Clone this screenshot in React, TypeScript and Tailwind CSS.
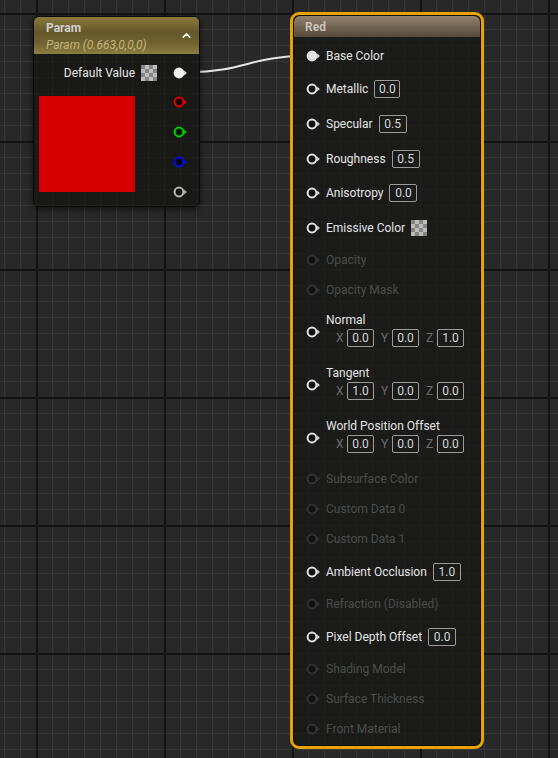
import * as React from "react";
import {ChevronUp} from "lucide-react";

const font = {fontFamily: "Roboto, 'Noto Sans', sans-serif"};

function Pin({color = "#e2e2e2", fill = "#111", solid = false}) {
  return (
    <svg width="14" height="12" viewBox="0 0 14 12" className="shrink-0">
      <circle
        cx="6"
        cy="6"
        r="4.4"
        fill={solid ? color : fill}
        stroke={color}
        strokeWidth="2"
      />
      <polygon points="11.2,3.6 13.8,6 11.2,8.4" fill={color} />
    </svg>
  );
}

function Checker() {
  return (
    <div className="w-4 h-4 shrink-0 bg-[conic-gradient(#bcbcbc_25%,#858585_0_50%,#bcbcbc_0_75%,#858585_0)] bg-[size:8px_8px]" />
  );
}

function ValueBox({value, w = "w-[28px]"}) {
  return (
    <div
      className={`${w} h-[18px] shrink-0 flex items-center justify-center border border-[#9a9a9a] rounded-[2px] text-[12px] text-[#d6d6d6] leading-none`}>
      {value}
    </div>
  );
}

function Row({label, h, disabled = false, solid = false, extra = null}) {
  return (
    <div className={`${h} shrink-0`}>
      <div className="h-5 flex items-center pl-3 gap-[6px]">
        {disabled ? (
          <Pin color="#333532" fill="#121311" />
        ) : (
          <Pin solid={solid} />
        )}
        <span
          className={`text-[12px] leading-none whitespace-nowrap ${
            disabled ? "text-[#4a4b49]" : "text-[#e4e4e4]"
          }`}>
          {label}
        </span>
        {extra}
      </div>
    </div>
  );
}

function VectorRow({label, h, values}) {
  return (
    <div className={`${h} shrink-0`}>
      <div className="h-9 flex items-center pl-3 gap-[6px]">
        <div className="mt-[6px]">
          <Pin />
        </div>
        <div className="flex flex-col">
          <div className="h-[18px] flex items-center text-[12px] text-[#e4e4e4] leading-none">
            {label}
          </div>
          <div className="h-[18px] flex items-center pl-[10px] gap-[7px]">
            {["X", "Y", "Z"].map((axis, i) => (
              <div key={axis} className="flex items-center gap-[4px]">
                <span className="w-[7px] text-[12px] text-[#6c6c6c] leading-none">
                  {axis}
                </span>
                <ValueBox value={values[i]} w="w-[27px]" />
              </div>
            ))}
          </div>
        </div>
      </div>
    </div>
  );
}

// faint canvas grid that shows through the node bodies
const bodyGrid =
  "bg-fixed bg-[linear-gradient(90deg,#1f201e_1px,transparent_1px),linear-gradient(#1f201e_1px,transparent_1px)] bg-[size:16px_16px,16px_16px] bg-[position:36px_13px,36px_13px]";

function ParamNode() {
  return (
    <div className="absolute left-[33px] top-[16px] w-[167px] h-[191px] rounded-[6px] border border-[#0b0b0b] overflow-hidden shadow-[0_2px_6px_rgba(0,0,0,0.6)] flex flex-col">
      <div className="h-[37px] shrink-0 relative bg-[linear-gradient(180deg,#8a7a3b_0%,#64572a_40%,#6f6230_70%,#8c7d42_100%)] pl-[12px] pt-[3px]">
        <div className="text-[12px] font-bold text-[#d0d0d0] leading-[17px]">
          Param
        </div>
        <div className="text-[12px] italic text-[#c2b47c] leading-[16px]">
          Param (0.663,0,0,0)
        </div>
        <ChevronUp
          size={13}
          strokeWidth={3}
          color="#f2f2f2"
          className="absolute right-[6px] top-[12px]"
        />
      </div>
      <div className={`flex-1 bg-[#181917] pt-[9px] ${bodyGrid}`}>
        <div className="h-5 flex items-center justify-end pr-[12px]">
          <span className="text-[12px] text-[#e6e6e6] leading-none">
            Default Value
          </span>
          <div className="ml-[6px]">
            <Checker />
          </div>
          <div className="ml-[16px]">
            <Pin color="#f2f2f2" solid />
          </div>
        </div>
        <div className="flex items-start justify-between mt-[9px] pl-[5px] pr-[12px]">
          <div className="mt-[4px] w-[96px] h-[96px] bg-[#d60000]" />
          <div className="flex flex-col gap-[10px]">
            <div className="h-5 flex items-center">
              <Pin color="#e00000" fill="#1a0000" />
            </div>
            <div className="h-5 flex items-center">
              <Pin color="#00d400" fill="#001a00" />
            </div>
            <div className="h-5 flex items-center">
              <Pin color="#0010e0" fill="#00001a" />
            </div>
            <div className="h-5 flex items-center">
              <Pin color="#b8b8b8" />
            </div>
          </div>
        </div>
      </div>
    </div>
  );
}

function RedNode() {
  return (
    <div className="absolute left-[290px] top-[12px] w-[194px] h-[737px] rounded-[9px] border-[3px] border-[#e9a300] bg-[#0e0e0d] p-px">
      <div className="w-full h-full rounded-[6px] overflow-hidden flex flex-col bg-[#1a1b19]">
        <div className="h-[21px] shrink-0 bg-[linear-gradient(180deg,#93836f_0%,#6f6150_55%,#574b3e_100%)] pl-[11px] flex items-center">
          <span className="text-[12px] font-bold text-[#c9c3ba] leading-none">
            Red
          </span>
        </div>
        <div className={`flex-1 flex flex-col pt-[9px] bg-[#1a1b19] ${bodyGrid}`}>
          <Row label="Base Color" h="h-[33px]" solid />
          <Row
            label="Metallic"
            h="h-[35px]"
            extra={<ValueBox value="0.0" w="w-[26px]" />}
          />
          <Row label="Specular" h="h-[35px]" extra={<ValueBox value="0.5" />} />
          <Row label="Roughness" h="h-[34px]" extra={<ValueBox value="0.5" />} />
          <Row label="Anisotropy" h="h-[35px]" extra={<ValueBox value="0.0" />} />
          <Row
            label="Emissive Color"
            h="h-[32px]"
            extra={<Checker />}
          />
          <Row label="Opacity" h="h-[30px]" disabled />
          <Row label="Opacity Mask" h="h-[31px]" disabled />
          <VectorRow label="Normal" h="h-[53px]" values={["0.0", "0.0", "1.0"]} />
          <VectorRow label="Tangent" h="h-[53px]" values={["1.0", "0.0", "0.0"]} />
          <VectorRow
            label="World Position Offset"
            h="h-[52px]"
            values={["0.0", "0.0", "0.0"]}
          />
          <Row label="Subsurface Color" h="h-[30px]" disabled />
          <Row label="Custom Data 0" h="h-[30px]" disabled />
          <Row label="Custom Data 1" h="h-[33px]" disabled />
          <Row
            label="Ambient Occlusion"
            h="h-[32px]"
            extra={<ValueBox value="1.0" />}
          />
          <Row label="Refraction (Disabled)" h="h-[33px]" disabled />
          <Row
            label="Pixel Depth Offset"
            h="h-[32px]"
            extra={<ValueBox value="0.0" />}
          />
          <Row label="Shading Model" h="h-[30px]" disabled />
          <Row label="Surface Thickness" h="h-[30px]" disabled />
          <Row label="Front Material" h="h-[26px]" disabled />
        </div>
      </div>
    </div>
  );
}

export default function App() {
  return (
    <main
      style={font}
      className="relative w-[558px] h-[758px] overflow-hidden bg-[#282828] bg-[linear-gradient(90deg,#131313_2px,transparent_2px),linear-gradient(#131313_2px,transparent_2px),linear-gradient(90deg,#363636_1px,transparent_1px),linear-gradient(#363636_1px,transparent_1px)] bg-[size:128px_128px,128px_128px,16px_16px,16px_16px] bg-[position:36px_13px,36px_13px,36px_13px,36px_13px]">
      <svg
        className="absolute left-0 top-0 pointer-events-none"
        width="558"
        height="758">
        <path
          d="M188 72 C 245 72, 250 56, 306 56"
          fill="none"
          stroke="#e6e6e6"
          strokeWidth="2"
        />
      </svg>
      <ParamNode />
      <RedNode />
    </main>
  );
}
